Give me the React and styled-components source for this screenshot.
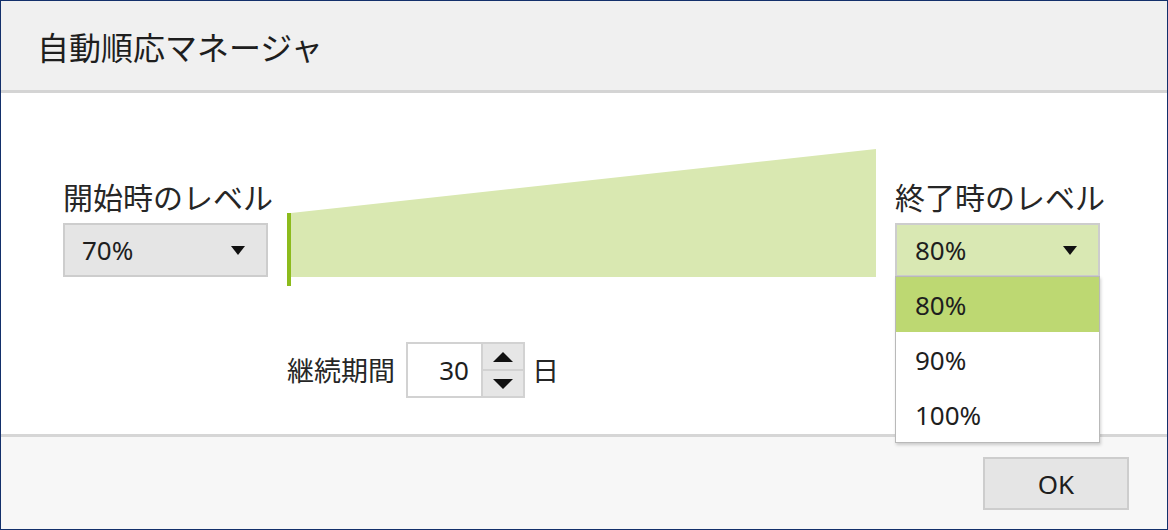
import React from 'react';
import styled, { createGlobalStyle } from 'styled-components';

const GlobalStyle = createGlobalStyle`
  html, body {
    margin: 0;
    padding: 0;
    background: #ffffff;
  }
  * {
    box-sizing: border-box;
  }
`;

const Dialog = styled.div`
  width: 1168px;
  height: 530px;
  border: 1px solid #13306b;
  display: flex;
  flex-direction: column;
  font-family: 'Noto Sans', 'Noto Sans CJK JP', sans-serif;
  color: #222;
  background: #fff;
`;

const Header = styled.div`
  height: 92px;
  flex-shrink: 0;
  background: #f0f0f0;
  border-bottom: 3px solid #d4d4d4;
  display: flex;
  align-items: center;
  padding-left: 36px;
`;

const Title = styled.h1`
  margin: 0;
  font-family: 'Noto Sans CJK JP', sans-serif;
  font-weight: 400;
  font-size: 32px;
  line-height: 38px;
  color: #1e1e1e;
`;

const Body = styled.div`
  flex: 1;
  padding: 56px 0 0 62px;
  position: relative;
`;

const LevelRow = styled.div`
  display: flex;
  align-items: flex-end;
`;

const LevelColumn = styled.div`
  width: ${(p) => p.$width}px;
  margin-bottom: 9px;
  position: relative;
  display: flex;
  flex-direction: column;
  gap: 9px;
`;

const Label = styled.div`
  font-family: 'Noto Sans CJK JP', sans-serif;
  font-size: 30px;
  line-height: 36px;
  white-space: nowrap;
  color: #262626;
`;

const Select = styled.div`
  height: 54px;
  border: 2px solid #cdcdcd;
  background: ${(p) => (p.$active ? '#d9e8b3' : '#e5e5e5')};
  display: flex;
  align-items: center;
  justify-content: space-between;
  padding: 0 21px 0 ${(p) => (p.$active ? 18 : 17)}px;
  font-size: 26px;
  color: #1e1e1e;
`;

const Chart = styled.svg`
  display: block;
  flex-shrink: 0;
  margin: 0 19px;
`;

const Menu = styled.ul`
  position: absolute;
  top: 100%;
  left: 0;
  width: 205px;
  margin: -1px 0 0;
  padding: 0;
  list-style: none;
  background: #fff;
  border: 1px solid #b9b9b9;
  box-shadow: 1px 2px 3px rgba(0, 0, 0, 0.18);
  z-index: 2;
`;

const MenuItem = styled.li`
  height: 55px;
  display: flex;
  align-items: center;
  padding-left: 19px;
  font-size: 26px;
  color: #1e1e1e;
  background: ${(p) => (p.$selected ? '#bdd872' : 'transparent')};
`;

const DurationRow = styled.div`
  display: flex;
  align-items: center;
  margin: 56px 0 0 224px;
`;

const DurationText = styled.span`
  font-family: 'Noto Sans CJK JP', sans-serif;
  font-size: 27px;
  line-height: 32px;
  color: #262626;
`;

const Spin = styled.div`
  width: 119px;
  height: 56px;
  margin: 0 7px 0 11px;
  border: 2px solid #d2d2d2;
  display: flex;
  background: #fff;
`;

const SpinValue = styled.div`
  flex: 1;
  display: flex;
  align-items: center;
  justify-content: flex-end;
  padding-right: 12px;
  font-size: 26px;
  color: #1e1e1e;
`;

const SpinButtons = styled.div`
  width: 42px;
  display: flex;
  flex-direction: column;
  border-left: 2px solid #d2d2d2;
`;

const SpinButton = styled.div`
  flex: 1;
  background: #e6e6e6;
  display: flex;
  align-items: center;
  justify-content: center;
  & + & {
    border-top: 2px solid #d2d2d2;
  }
`;

const Footer = styled.div`
  height: 95px;
  flex-shrink: 0;
  background: #f7f7f7;
  border-top: 3px solid #d6d6d6;
  display: flex;
  justify-content: flex-end;
  align-items: flex-start;
  padding: 20px 38px 0 0;
`;

const OkButton = styled.button`
  width: 146px;
  height: 53px;
  background: #e5e5e5;
  border: 2px solid #cdcdcd;
  font-family: 'Noto Sans', sans-serif;
  font-size: 26px;
  color: #1e1e1e;
  padding: 0;
`;

const Caret = ({ up }) => (
  <svg width="20" height="10" viewBox="0 0 20 10">
    <polygon points={up ? '0,10 20,10 10,0' : '0,0 20,0 10,10'} fill="#111" />
  </svg>
);

const DropArrow = () => (
  <svg width="14" height="9" viewBox="0 0 14 9">
    <polygon points="0,0 14,0 7,9" fill="#111" />
  </svg>
);

const options = ['80%', '90%', '100%'];

export default function App() {
  return (
    <>
      <GlobalStyle />
      <Dialog>
        <Header>
          <Title>自動順応マネージャ</Title>
        </Header>
        <Body>
          <LevelRow>
            <LevelColumn $width={205}>
              <Label>開始時のレベル</Label>
              <Select>
                <span>70%</span>
                <DropArrow />
              </Select>
            </LevelColumn>
            <Chart width="589" height="137" viewBox="0 0 589 137">
              <polygon points="4,64 589,0 589,128 4,128" fill="#d9e8b1" />
              <rect x="0" y="64" width="4" height="73" fill="#8cbb1c" />
            </Chart>
            <LevelColumn $width={205}>
              <Label>終了時のレベル</Label>
              <Select $active>
                <span>80%</span>
                <DropArrow />
              </Select>
              <Menu>
                {options.map((o, i) => (
                  <MenuItem key={o} $selected={i === 0}>
                    {o}
                  </MenuItem>
                ))}
              </Menu>
            </LevelColumn>
          </LevelRow>
          <DurationRow>
            <DurationText>継続期間</DurationText>
            <Spin>
              <SpinValue>30</SpinValue>
              <SpinButtons>
                <SpinButton>
                  <Caret up />
                </SpinButton>
                <SpinButton>
                  <Caret />
                </SpinButton>
              </SpinButtons>
            </Spin>
            <DurationText>日</DurationText>
          </DurationRow>
        </Body>
        <Footer>
          <OkButton>OK</OkButton>
        </Footer>
      </Dialog>
    </>
  );
}
